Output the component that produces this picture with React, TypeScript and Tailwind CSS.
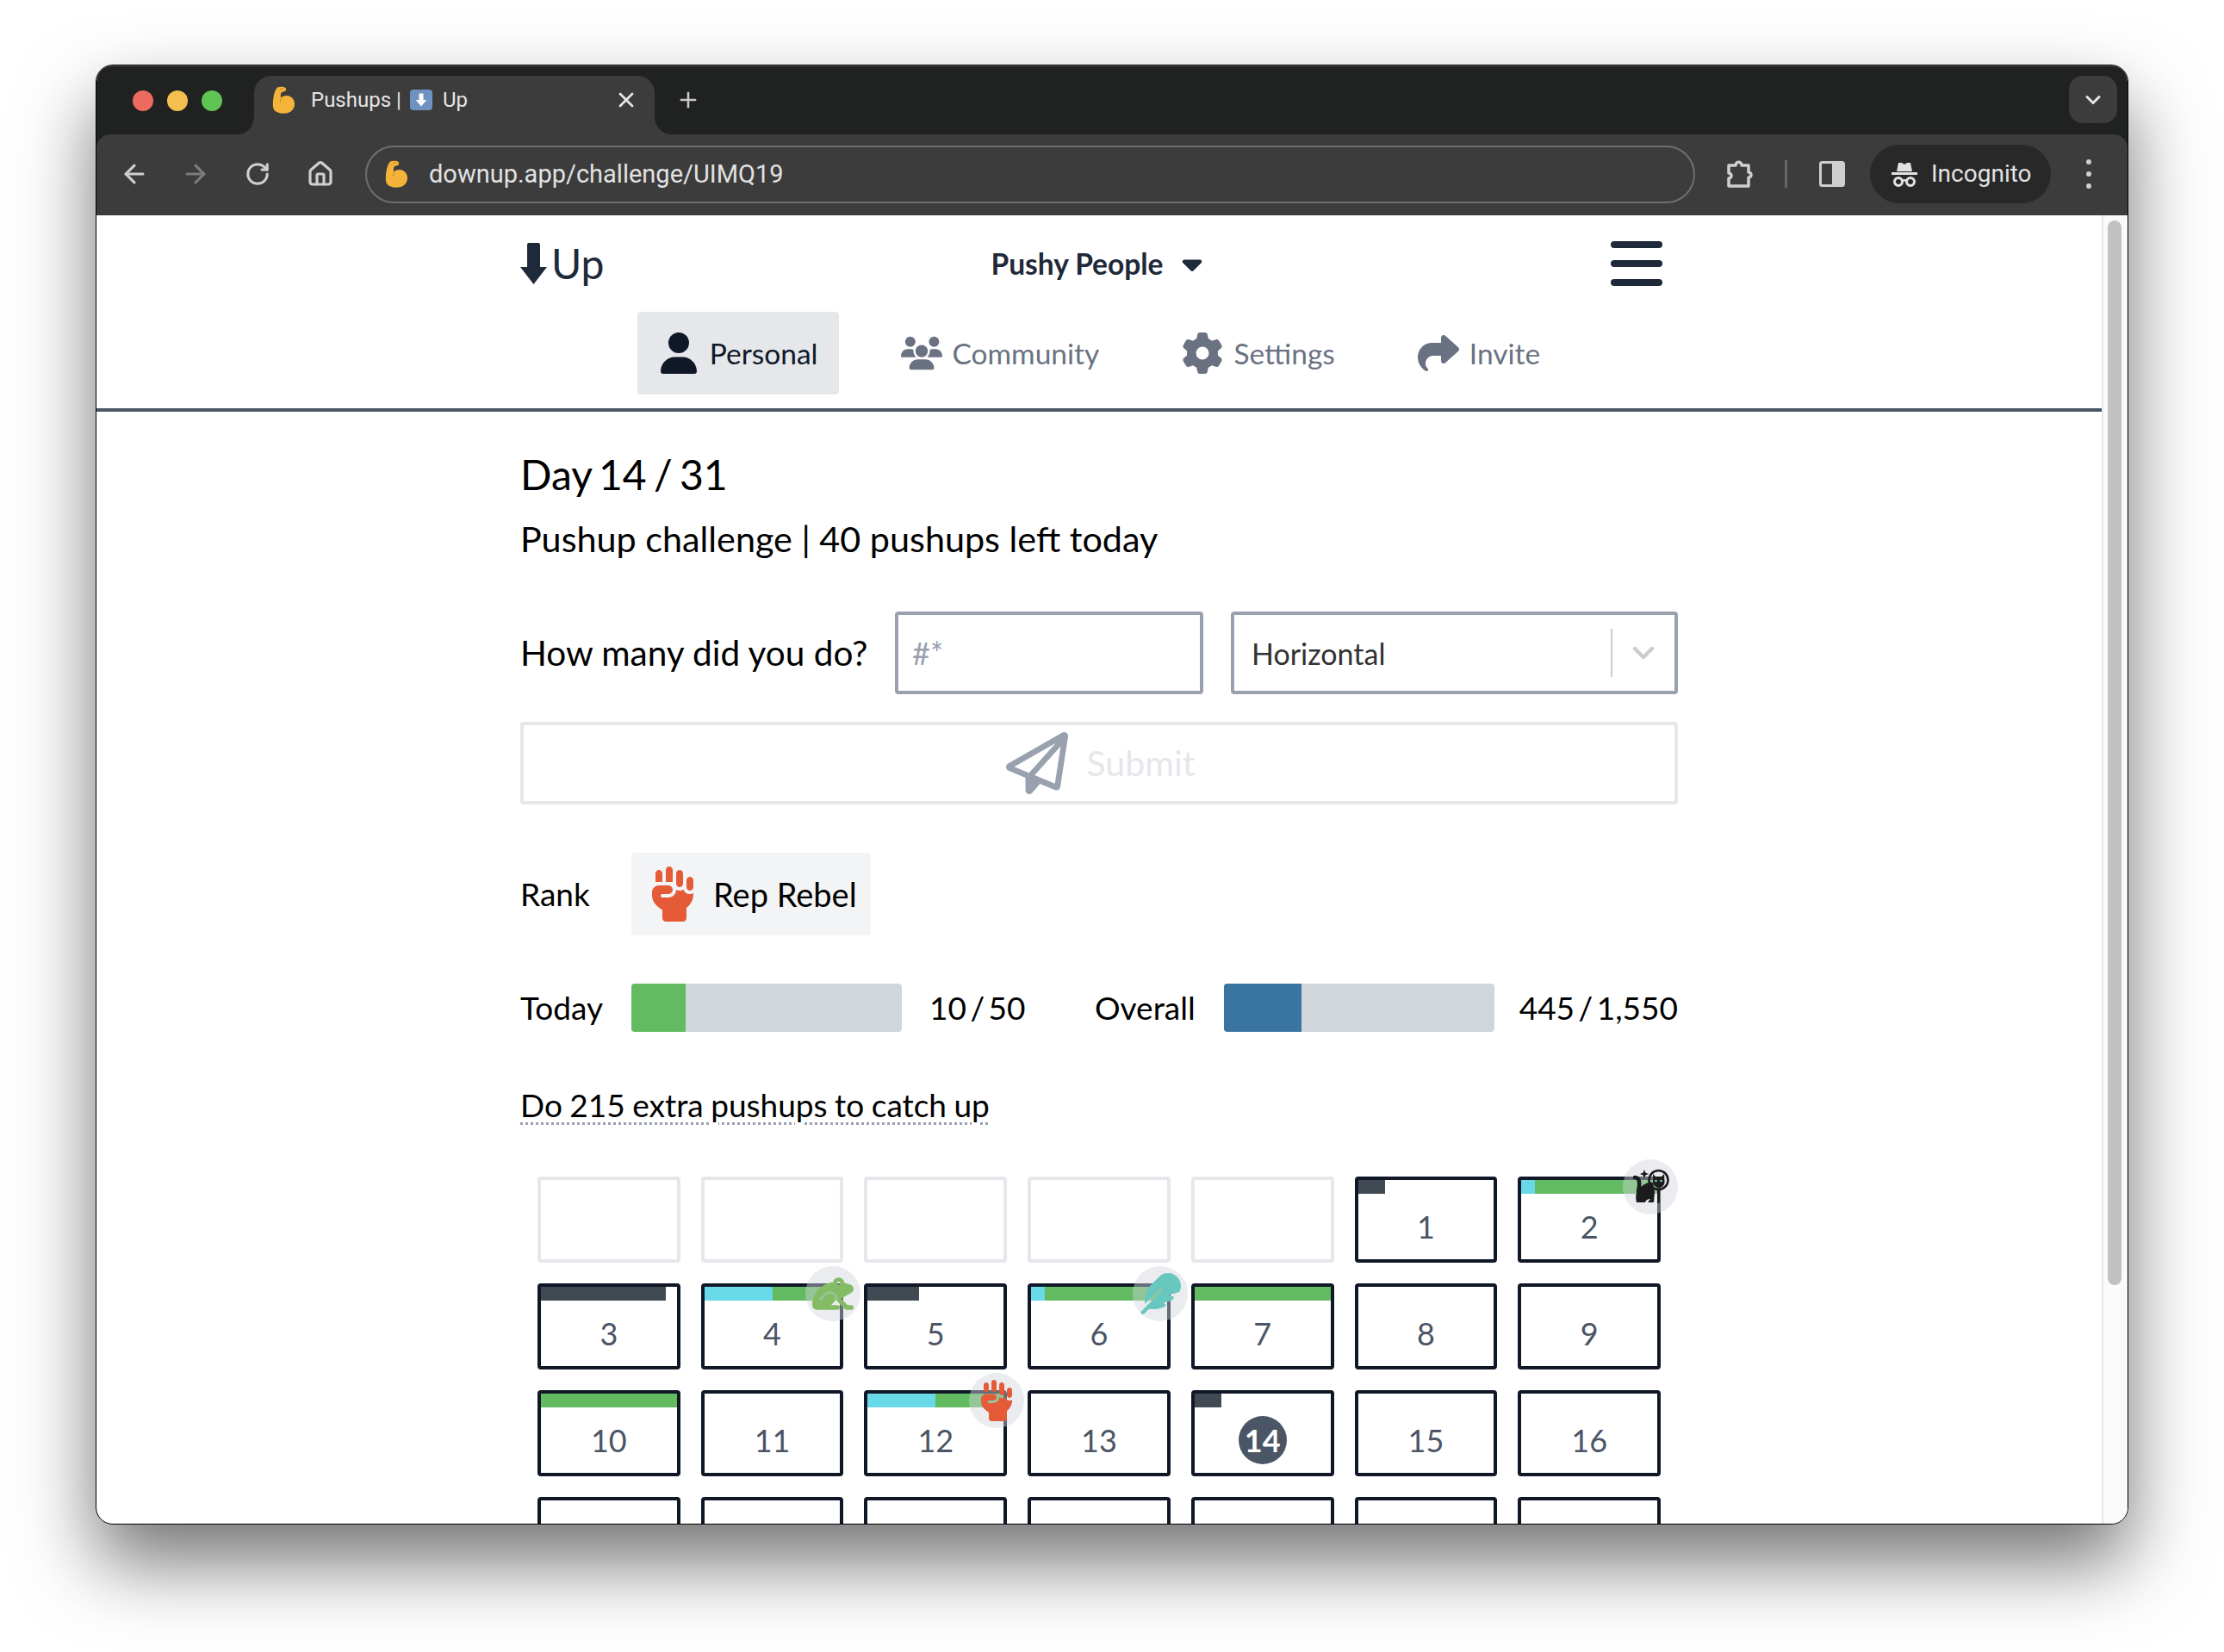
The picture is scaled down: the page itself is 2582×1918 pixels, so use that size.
import { ArrowLeft, ArrowRight, ChevronDown, House, Plus, RotateCw, X } from "lucide-react";
import {
  FaCaretDown,
  FaFeather,
  FaFrog,
  FaGear,
  FaHandFist,
  FaRegPaperPlane,
  FaShare,
  FaUser,
  FaUsers,
} from "react-icons/fa6";

type Segment = { color: "dark" | "cyan" | "green"; width: number };

interface Day {
  day?: number;
  bar?: Segment[];
  badge?: "frog" | "feather" | "fist" | "cat";
  today?: boolean;
}

// Row four runs under the bottom of the window, only its top edge is visible
const LAST_VISIBLE_NUMBER = 16;

const SEGMENT_COLORS = {
  dark: "bg-[#414952]",
  cyan: "bg-[#67d9e8]",
  green: "bg-[#62bb60]",
};

const DAYS: Day[] = [
  {},
  {},
  {},
  {},
  {},
  { day: 1, bar: [{ color: "dark", width: 20 }] },
  { day: 2, badge: "cat", bar: [{ color: "cyan", width: 10 }, { color: "green", width: 90 }] },
  { day: 3, bar: [{ color: "dark", width: 92 }] },
  { day: 4, badge: "frog", bar: [{ color: "cyan", width: 50 }, { color: "green", width: 50 }] },
  { day: 5, bar: [{ color: "dark", width: 38 }] },
  { day: 6, badge: "feather", bar: [{ color: "cyan", width: 10 }, { color: "green", width: 90 }] },
  { day: 7, bar: [{ color: "green", width: 100 }] },
  { day: 8 },
  { day: 9 },
  { day: 10, bar: [{ color: "green", width: 100 }] },
  { day: 11 },
  { day: 12, badge: "fist", bar: [{ color: "cyan", width: 50 }, { color: "green", width: 50 }] },
  { day: 13 },
  { day: 14, today: true, bar: [{ color: "dark", width: 20 }] },
  { day: 15 },
  { day: 16 },
  { day: 17 },
  { day: 18 },
  { day: 19 },
  { day: 20 },
  { day: 21 },
  { day: 22 },
  { day: 23 },
];

function MuscleEmoji() {
  return (
    <svg viewBox="0 0 30 32" className="w-[30px] h-[32px] shrink-0">
      <path
        fill="#f4b43a"
        d="M9 1.500C12 .2 17 .5 18.500 2c1 1.200.8 3-.4 3.800-1.200.8-3 .8-4.300 1.400l-.6 1.600c-.6 1.800-.4 3.400.2 4.600 2.400-2.200 6.600-3 10-1.600 3.600 1.500 5.800 5.200 5.600 9.400-.2 5.400-4.400 9.600-10.400 10.400-5 .6-10.200-.6-12.600-3C3.600 26 3.600 21.400 4 17.400 4.400 12 5.600 5.400 9 1.500Z"
      />
      <path fill="none" stroke="#d28c1e" strokeWidth="1.200" d="M13.600 14c-1 1.600-1.400 3.400-1.200 5" />
      <path fill="none" stroke="#d28c1e" strokeWidth="1" d="M12 3.500c1.500-.6 3-.8 4.500-.6" />
    </svg>
  );
}

function CatBadge() {
  return (
    <svg viewBox="0 0 48 48" className="w-12 h-12">
      <path fill="#1c1c1c" d="M17 4l1.400 3.400L22 9l-3.600 1.400L17 14l-1.400-3.600L12 9l3.600-1.600Z" />
      <path fill="none" stroke="#1c1c1c" strokeWidth="4.500" strokeLinecap="round" d="M6 13c6 0 6 8 4 16" />
      <path fill="#1c1c1c" d="M8 42C6 34 8 27 13 24c5-4 9-6 14-5l2 11-1 12h-7l3-4c-3 0-5 1-6 4Z" />
      <circle cx="33.500" cy="16" r="11" fill="none" stroke="#1c1c1c" strokeWidth="2.600" />
      <path fill="#1c1c1c" d="M27 9l3 3h7l3-3 .6 9c0 4-3 7-6.600 7s-7-3-7-7Z" />
      <circle cx="30.500" cy="17" r="1.300" fill="#7fd0c8" />
      <circle cx="36.500" cy="17" r="1.300" fill="#7fd0c8" />
      <rect x="32" y="27" width="3" height="16" rx="1.500" fill="#1c1c1c" />
    </svg>
  );
}

function DayBadge({ kind }: { kind: NonNullable<Day["badge"]> }) {
  return (
    <div className="absolute -top-6 -right-6 w-16 h-16 rounded-full bg-gray-300/45 flex items-center justify-center">
      {kind === "frog" && <FaFrog className="w-12 h-12 text-[#85bb65]" />}
      {kind === "feather" && <FaFeather className="w-12 h-12 text-[#68c8c0]" />}
      {kind === "fist" && <FaHandFist className="w-12 h-12 text-[#e55b38]" />}
      {kind === "cat" && <CatBadge />}
    </div>
  );
}

function DayCell({ day }: { day: Day }) {
  if (day.day === undefined) {
    return <div className="h-[100px] border-4 border-gray-200 rounded" />;
  }

  return (
    <div className="relative h-[100px] border-4 border-gray-900 rounded flex flex-col">
      <div className="flex h-4 shrink-0">
        {day.bar?.map((segment, i) => (
          <div key={i} className={SEGMENT_COLORS[segment.color]} style={{ width: `${segment.width}%` }} />
        ))}
      </div>
      <div className="flex-1 flex items-center justify-center text-[36px] text-gray-600">
        {day.today ? (
          <span className="w-14 h-14 rounded-full bg-gray-600 text-white font-bold flex items-center justify-center">
            {day.day}
          </span>
        ) : (
          day.day <= LAST_VISIBLE_NUMBER && day.day
        )}
      </div>
      {day.badge && <DayBadge kind={day.badge} />}
    </div>
  );
}

function NavTab({ icon, label, active }: { icon: React.ReactNode; label: string; active?: boolean }) {
  return (
    <div
      className={`h-24 px-6 flex items-center gap-3 rounded text-[33.5px] ${
        active ? "bg-gray-200 text-gray-900" : "text-gray-500"
      }`}
    >
      {icon}
      <span>{label}</span>
    </div>
  );
}

function Progress({ color, width }: { color: string; width: number }) {
  return (
    <div className="w-[314px] h-14 bg-gray-300 rounded overflow-hidden">
      <div className={`h-full ${color}`} style={{ width: `${width}%` }} />
    </div>
  );
}

function ChromeBar() {
  return (
    <div className="font-[Roboto,sans-serif] shrink-0 bg-[#202221]">
      <div className="h-20 flex shadow-[inset_0_1px_0_#5a5a5a]">
        <div className="pl-[42px] pt-[29px] flex gap-4 h-fit">
          <div className="w-6 h-6 rounded-full bg-[#ec6a5f]" />
          <div className="w-6 h-6 rounded-full bg-[#f4bf4f]" />
          <div className="w-6 h-6 rounded-full bg-[#5fc454]" />
        </div>
        <div className="relative ml-[37px] mt-3 w-[465px] h-[68px] bg-[#3c3c3c] rounded-t-[20px] flex items-center pl-[18px] pb-3 text-[#e6e6e6] text-[24px]">
          <div className="absolute -left-5 bottom-0 w-5 h-5 bg-[#3c3c3c]">
            <div className="w-5 h-5 bg-[#202221] rounded-br-[20px]" />
          </div>
          <div className="absolute -right-5 bottom-0 w-5 h-5 bg-[#3c3c3c]">
            <div className="w-5 h-5 bg-[#202221] rounded-bl-[20px]" />
          </div>
          <MuscleEmoji />
          <span className="ml-[18px] whitespace-nowrap">Pushups |</span>
          <div className="ml-[10px] w-[26px] h-[24px] rounded bg-[#6f93c0] flex items-center justify-center">
            <svg viewBox="0 0 16 16" className="w-5 h-5">
              <path fill="#fff" d="M6 2h4v6h3l-5 6-5-6h3Z" />
            </svg>
          </div>
          <span className="ml-3">Up</span>
          <X className="absolute right-[19px] top-[14px] w-7 h-7 text-[#e6e6e6]" strokeWidth={2.4} />
        </div>
        <Plus className="ml-[25px] mt-[26px] w-7 h-7 text-[#c8c8c8]" strokeWidth={2.2} />
        <div className="ml-auto mr-3 mt-3 w-14 h-[55px] rounded-2xl bg-[#3c3c3c] flex items-center justify-center">
          <ChevronDown className="w-7 h-7 text-[#e6e6e6]" strokeWidth={2.6} />
        </div>
      </div>

      <div className="h-[94px] pb-[2px] bg-[#3c3c3c] rounded-t-2xl flex items-center text-[#cfcfcf]">
        <ArrowLeft className="ml-[27px] w-[34px] h-[34px]" strokeWidth={2.2} />
        <ArrowRight className="ml-[37px] w-[34px] h-[34px] text-[#7c7c7c]" strokeWidth={2.2} />
        <RotateCw className="ml-[40px] w-[30px] h-[30px]" strokeWidth={2.4} />
        <House className="ml-[42px] w-[32px] h-[32px]" strokeWidth={2.4} />
        <div className="ml-[36px] w-[1544px] h-[67px] rounded-full border-2 border-[#6f6f6f] flex items-center pl-[18px]">
          <MuscleEmoji />
          <span className="ml-[24px] pt-[2px] text-[29px] text-[#e2e2e2]">downup.app/challenge/UIMQ19</span>
        </div>
        <svg viewBox="0 0 32 36" className="ml-[35px] w-8 h-9">
          <path
            fill="none"
            stroke="#cfcfcf"
            strokeWidth="3.500"
            strokeLinejoin="round"
            d="M4 8h8c0-5 7-5 7 0h8v8c4 0 4 6 0 6v10H4v-9c4 0 4-6 0-6Z"
          />
        </svg>
        <div className="ml-[37px] w-[3px] h-8 bg-[#666]" />
        <svg viewBox="0 0 30 30" className="ml-[37px] w-[30px] h-[30px]">
          <rect x="1.500" y="1.500" width="27" height="27" rx="2" fill="none" stroke="#cfcfcf" strokeWidth="3" />
          <rect x="15" y="1.500" width="13.500" height="27" fill="#cfcfcf" />
        </svg>
        <div className="ml-[29px] w-[210px] h-[68px] rounded-full bg-[#282828] flex items-center pl-[24px]">
          <svg viewBox="0 0 32 32" className="w-8 h-8">
            <path fill="#e2e2e2" d="M9 3h4l3 2 3-2h4l2 10H7ZM1 14h30v3H1Z" />
            <circle cx="9" cy="25" r="4.500" fill="none" stroke="#e2e2e2" strokeWidth="3" />
            <circle cx="23" cy="25" r="4.500" fill="none" stroke="#e2e2e2" strokeWidth="3" />
            <path fill="none" stroke="#e2e2e2" strokeWidth="2.500" d="M13 24c2-1 4-1 6 0" />
          </svg>
          <span className="ml-[15px] text-[28px] text-[#e2e2e2]">Incognito</span>
        </div>
        <div className="ml-[41px] flex flex-col gap-2">
          <div className="w-[6px] h-[6px] rounded-full bg-[#cfcfcf]" />
          <div className="w-[6px] h-[6px] rounded-full bg-[#cfcfcf]" />
          <div className="w-[6px] h-[6px] rounded-full bg-[#cfcfcf]" />
        </div>
      </div>
    </div>
  );
}

export default function App() {
  return (
    <div className="h-[1918px] overflow-hidden bg-white pt-[75px] pl-[111px]">
      <div className="w-[2360px] h-[1695px] border border-black rounded-[20px] overflow-hidden bg-white flex flex-col shadow-[0_44px_88px_rgba(0,0,0,0.55)]">
        <ChromeBar />

        <div className="flex-1 min-h-0 flex font-[Lato,sans-serif]">
          <div className="flex-1 min-w-0">
            <div className="w-[1344px] mx-auto grid grid-cols-3 items-center h-[112px] text-gray-800">
              <div className="flex items-center">
                <svg viewBox="0 0 31 48" className="w-[31px] h-12">
                  <path
                    fill="currentColor"
                    d="M8 2a2 2 0 0 1 2-2h11a2 2 0 0 1 2 2v26h8L15.500 48 0 28h8Z"
                  />
                </svg>
                <span className="text-[48px] ml-[5px]">Up</span>
              </div>
              <div className="flex items-center justify-center gap-[15px] text-[33.5px] font-bold whitespace-nowrap">
                Pushy People
                <FaCaretDown className="w-9 h-9" />
              </div>
              <div className="justify-self-end mr-[18px] flex flex-col gap-[14px]">
                <div className="w-[60px] h-2 bg-gray-800 rounded" />
                <div className="w-[60px] h-2 bg-gray-800 rounded" />
                <div className="w-[60px] h-2 bg-gray-800 rounded" />
              </div>
            </div>

            <div className="flex justify-center gap-12 pb-4 border-b-4 border-gray-600">
              <NavTab active label="Personal" icon={<FaUser className="w-12 h-12" />} />
              <NavTab label="Community" icon={<FaUsers className="w-12 h-12" />} />
              <NavTab label="Settings" icon={<FaGear className="w-12 h-12" />} />
              <NavTab label="Invite" icon={<FaShare className="w-12 h-12" />} />
            </div>

            <div className="w-[1344px] mx-auto text-black">
              <div className="mt-[43px] text-[48px] leading-[60px] [word-spacing:-4px]">Day 14 / 31</div>
              <div className="mt-[14px] text-[41.3px] leading-[60px]">Pushup challenge | 40 pushups left today</div>

              <div className="mt-[55px] flex items-center gap-8">
                <div className="w-[403px] text-[40.5px] whitespace-nowrap">How many did you do?</div>
                <input
                  placeholder="#*"
                  className="w-[358px] h-24 border-4 border-gray-400 rounded px-4 text-[36px] placeholder:text-gray-400"
                />
                <div className="flex-1 h-24 border-4 border-gray-400 rounded flex items-center pl-5 text-[34px] text-[#333]">
                  <span className="flex-1">Horizontal</span>
                  <div className="w-[2px] h-14 bg-[#ccc]" />
                  <ChevronDown className="mx-4 w-10 h-10 text-[#ccc]" strokeWidth={2.6} />
                </div>
              </div>

              <div className="mt-8 h-24 border-4 border-gray-200 rounded flex items-center justify-center gap-[22px] pl-[3px]">
                <FaRegPaperPlane className="w-[72px] h-[72px] text-gray-400" />
                <span className="text-[41px] text-gray-200">Submit</span>
              </div>

              <div className="mt-14 flex items-center text-[37px]">
                <span className="w-[129px]">Rank</span>
                <div className="w-[278px] h-24 bg-gray-100 rounded flex items-center pl-5 gap-[19px] text-[38px]">
                  <FaHandFist className="w-[56px] h-[68px] text-[#e55b38]" />
                  <span>Rep Rebel</span>
                </div>
              </div>

              <div className="mt-14 h-14 flex items-center text-[37px] whitespace-nowrap [word-spacing:-5px]">
                <span className="w-[129px]">Today</span>
                <Progress color="bg-[#62bb60]" width={20} />
                <span className="ml-8 w-[192px]">10 / 50</span>
                <span className="w-[150px]">Overall</span>
                <Progress color="bg-[#3a75a1]" width={28.7} />
                <span className="ml-auto">445 / 1,550</span>
              </div>

              <div className="mt-[55px] text-[37px] leading-[60px] [word-spacing:-1px]">
                <span className="underline decoration-dotted decoration-gray-400 decoration-[3px] underline-offset-[6px]">
                  Do 215 extra pushups to catch up
                </span>
              </div>

              <div className="mt-[53px] px-5 grid grid-cols-7 gap-6">
                {DAYS.map((day, i) => (
                  <DayCell key={i} day={day} />
                ))}
              </div>
            </div>
          </div>

          <div className="w-[30px] shrink-0 bg-[#fafafa] border-l-2 border-[#e8e8e8] pt-[6px] pl-[5px]">
            <div className="w-4 h-[1236px] rounded-full bg-[#c1c1c1]" />
          </div>
        </div>
      </div>
    </div>
  );
}
